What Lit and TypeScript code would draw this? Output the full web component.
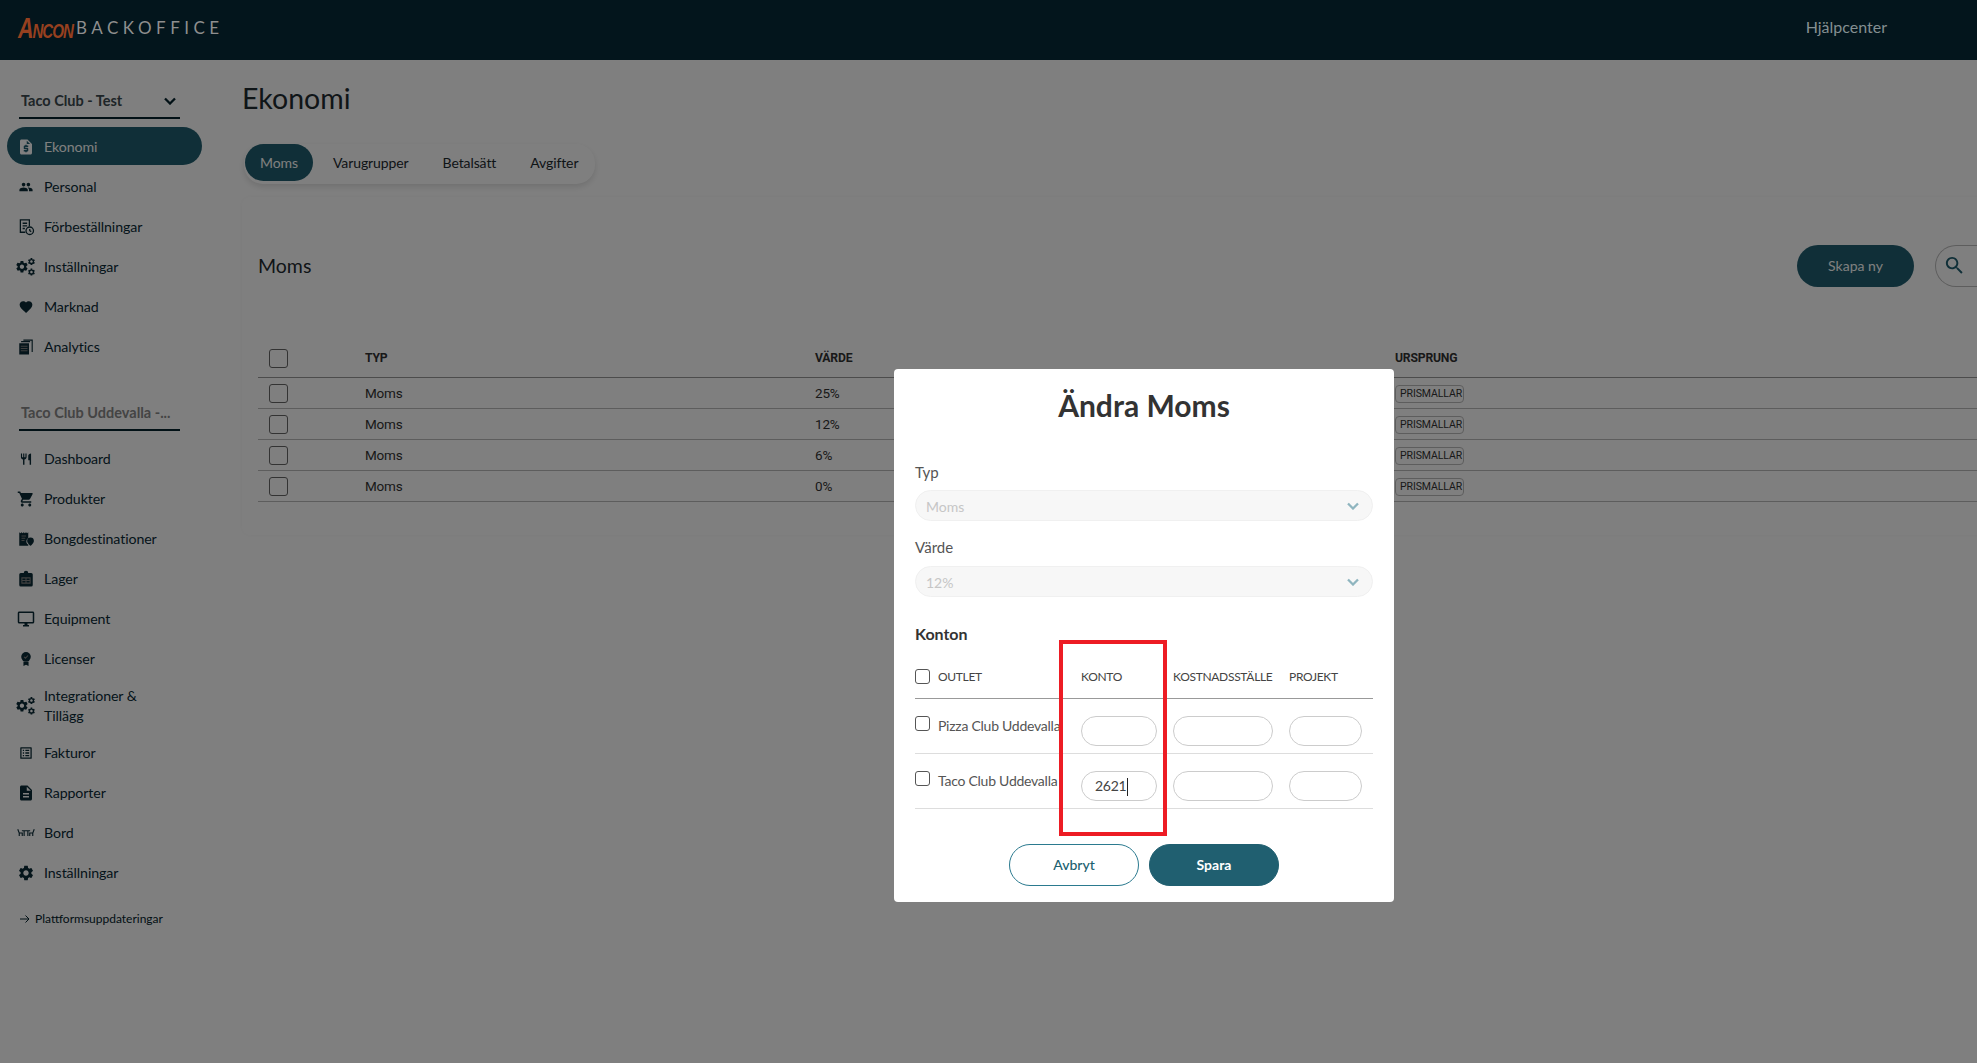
import { LitElement, html, css, svg } from 'lit';
import { customElement } from 'lit/decorators.js';

const p = (d: string) => svg`<path d=${d}></path>`;
// shrink a 24 unit glyph round the middle of its box
const small = (d: string, s: number) =>
  svg`<g transform="translate(${12 - 12 * s} ${12 - 12 * s}) scale(${s})"><path d=${d}></path></g>`;
const gearD = 'M19.14 12.94c.04-.3.06-.61.06-.94 0-.32-.02-.64-.07-.94l2.03-1.58c.18-.14.23-.41.12-.61l-1.92-3.32c-.12-.22-.37-.29-.59-.22l-2.39.96c-.5-.38-1.03-.7-1.62-.94l-.36-2.54c-.04-.24-.24-.41-.48-.41h-3.84c-.24 0-.43.17-.47.41l-.36 2.54c-.59.24-1.13.57-1.62.94l-2.39-.96c-.22-.08-.47 0-.59.22L2.74 8.87c-.12.21-.08.47.12.61l2.03 1.58c-.05.3-.09.63-.09.94s.02.64.07.94l-2.03 1.58c-.18.14-.23.41-.12.61l1.92 3.32c.12.22.37.29.59.22l2.39-.96c.5.38 1.03.7 1.62.94l.36 2.54c.05.24.24.41.48.41h3.84c.24 0 .44-.17.47-.41l.36-2.54c.59-.24 1.13-.56 1.62-.94l2.39.96c.22.08.47 0 .59-.22l1.92-3.32c.12-.22.07-.47-.12-.61l-2.01-1.58zM12 15.6c-1.98 0-3.6-1.62-3.6-3.6s1.62-3.6 3.6-3.6 3.6 1.62 3.6 3.6-1.62 3.6-3.6 3.6z';

const cogs = svg`
  <g transform="translate(-3 2) scale(.8)"><path d=${gearD}></path></g>
  <g transform="translate(13.5 -1) scale(.48)"><path d=${gearD}></path></g>
  <g transform="translate(13.5 13) scale(.48)"><path d=${gearD}></path></g>`;

const icons: Record<string, unknown> = {
  quote: p('M14 2H6c-1.1 0-1.99.9-1.99 2L4 20c0 1.1.89 2 1.99 2H18c1.1 0 2-.9 2-2V8l-6-6zm1 10h-4v1h3c.55 0 1 .45 1 1v3c0 .55-.45 1-1 1h-1v1h-2v-1H9v-2h4v-1h-3c-.55 0-1-.45-1-1v-3c0-.55.45-1 1-1h1V9h2v1h2v2zm-2-4V3.5L17.5 8H13z'),
  people: small('M16 11c1.66 0 2.99-1.34 2.99-3S17.66 5 16 5c-1.66 0-3 1.34-3 3s1.34 3 3 3zm-8 0c1.66 0 2.99-1.34 2.99-3S9.66 5 8 5C6.34 5 5 6.34 5 8s1.34 3 3 3zm0 2c-2.33 0-7 1.17-7 3.5V19h14v-2.5c0-2.33-4.67-3.5-7-3.5zm8 0c-.29 0-.62.02-.97.05 1.16.84 1.97 1.97 1.97 3.45V19h6v-2.5c0-2.33-4.67-3.5-7-3.5z', 0.8),
  preorder: svg`<g fill="none" stroke="currentColor" stroke-width="1.7">
    <path d="M11 19H4.500V2.500h12V11"></path><path d="M7.500 7h6M7.500 10.500h6M7.500 14h3"></path>
    <circle cx="17" cy="17" r="5"></circle><path d="M17 14.500V17l2 1.200"></path></g>`,
  cogs,
  heart: small('M12 21.35l-1.45-1.32C5.4 15.36 2 12.28 2 8.5 2 5.42 4.42 3 7.5 3c1.74 0 3.41.81 4.5 2.09C13.09 3.81 14.76 3 16.5 3 19.58 3 22 5.42 22 8.5c0 3.78-3.4 6.86-8.55 11.54L12 21.35z', 0.85),
  stack: svg`<path d="M3 7h13v15H3z"></path><path d="M18 5H6V3.500h12zM20 3H9V1.500h12.500V18H20z" transform="translate(-.5 .5)"></path>
    <path d="M5 11h9M5 14h9M5 17h9" stroke="#808080" stroke-width="1.300"></path>`,
  food: small('M11 9H9V2H7v7H5V2H3v7c0 2.12 1.66 3.84 3.75 3.97V22h2.5v-9.03C11.34 12.84 13 11.12 13 9V2h-2v7zm5-3v8h2.5v8H21V2c-2.76 0-5 2.24-5 4z', 0.75),
  cart: p('M7 18c-1.1 0-1.99.9-1.99 2S5.9 22 7 22s2-.9 2-2-.9-2-2-2zM1 2v2h2l3.6 7.59-1.35 2.45c-.16.28-.25.61-.25.96 0 1.1.9 2 2 2h12v-2H7.42c-.14 0-.25-.11-.25-.25l.03-.12.9-1.63h7.45c.75 0 1.41-.41 1.75-1.03l3.58-6.49c.08-.14.12-.31.12-.48 0-.55-.45-1-1-1H5.21l-.94-2H1zm16 16c-1.1 0-1.99.9-1.99 2s.89 2 1.99 2 2-.9 2-2-.9-2-2-2z'),
  bong: svg`<path d="M3 3l1.500 1.200L6 3l1.500 1.200L9 3l1.500 1.200L12 3l1.500 1.200L15 3v7.500a5.500 5.500 0 0 0-1 8.500H15v2H3z"></path>
    <path d="M6 8h6M6 11h5M6 14h4" stroke="#808080" stroke-width="1.300"></path>
    <path d="M18 10a4.500 4.500 0 0 1 4.500 4.500c0 3-4.500 6.500-4.500 6.500s-4.500-3.500-4.500-6.500A4.500 4.500 0 0 1 18 10z"></path>`,
  lager: svg`<path d="M5 4h4a3 3 0 0 1 6 0h4a2 2 0 0 1 2 2v14a2 2 0 0 1-2 2H5a2 2 0 0 1-2-2V6a2 2 0 0 1 2-2z"></path>
    <path d="M6.500 10.500h11v7h-11zM6.500 14h11M12 10.500v7" fill="none" stroke="#808080" stroke-width="1.400"></path>`,
  desktop: p('M21 2H3c-1.1 0-2 .9-2 2v12c0 1.1.9 2 2 2h7v2H8v2h8v-2h-2v-2h7c1.1 0 2-.9 2-2V4c0-1.100-.9-2-2-2zm0 14H3V4h18v12z'),
  license: svg`<g transform="translate(1.800 1.800) scale(.85)"><path d="M12 1a7.500 7.500 0 1 1 0 15 7.500 7.500 0 0 1 0-15z"></path><path d="M8 16h8v7l-4-2-4 2z"></path>
    <path d="M9 8.500l2.200 2.200L15.200 6.500" fill="none" stroke="#808080" stroke-width="1.600"></path></g>`,
  list: small('M19 5v14H5V5h14m1.100-2H3.900c-.5 0-.9.4-.9.9v16.200c0 .4.4.9.9.9h16.200c.4 0 .9-.5.9-.9V3.900c0-.5-.5-.9-.9-.9zM11 7h6v2h-6V7zm0 4h6v2h-6v-2zm0 4h6v2h-6v-2zM7 7h2v2H7V7zm0 4h2v2H7v-2zm0 4h2v2H7v-2z', 0.85),
  doc: p('M14 2H6c-1.100 0-1.990.9-1.990 2L4 20c0 1.100.89 2 1.990 2H18c1.100 0 2-.9 2-2V8l-6-6zm2 16H8v-2h8v2zm0-4H8v-2h8v2zm-3-5V3.500L18.500 9H13z'),
  table: svg`<g fill="none" stroke="currentColor" stroke-width="1.500">
    <path d="M6.500 9h11M9.500 9v7M14.500 9v7M1 7l2 5v4M3 12h4v4M23 7l-2 5v4M21 12h-4v4"></path></g>`,
  gear: p(gearD),
};

type NavItem = { icon: string; label: string; active?: boolean; wrap?: boolean };

const topNav: NavItem[] = [
  { icon: 'quote', label: 'Ekonomi', active: true },
  { icon: 'people', label: 'Personal' },
  { icon: 'preorder', label: 'Förbeställningar' },
  { icon: 'cogs', label: 'Inställningar' },
  { icon: 'heart', label: 'Marknad' },
  { icon: 'stack', label: 'Analytics' },
];

const bottomNav: NavItem[] = [
  { icon: 'food', label: 'Dashboard' },
  { icon: 'cart', label: 'Produkter' },
  { icon: 'bong', label: 'Bongdestinationer' },
  { icon: 'lager', label: 'Lager' },
  { icon: 'desktop', label: 'Equipment' },
  { icon: 'license', label: 'Licenser' },
  { icon: 'cogs', label: 'Integrationer & Tillägg', wrap: true },
  { icon: 'list', label: 'Fakturor' },
  { icon: 'doc', label: 'Rapporter' },
  { icon: 'table', label: 'Bord' },
  { icon: 'gear', label: 'Inställningar' },
];

const vatRows = ['25%', '12%', '6%', '0%'];
const outlets = [
  { name: 'Pizza Club Uddevalla', konto: '' },
  { name: 'Taco Club Uddevalla', konto: '2621' },
];

const chevron = svg`<svg class="chev" viewBox="0 0 12 8"><path d="M1 1.500l5 5 5-5" fill="none" stroke="currentColor" stroke-width="2.300"></path></svg>`;

@customElement('app-root')
export class AppRoot extends LitElement {
  static styles = css`
    :host {
      display: block;
      width: 1977px;
      height: 1063px;
      overflow: hidden;
      position: relative;
      background: #fff;
      font-family: Lato, 'Liberation Sans', sans-serif;
      color: #04222c;
    }
    * { box-sizing: border-box; }

    .topbar {
      position: relative;
      z-index: 1;
      height: 60px;
      background: #03151c;
      display: flex;
      align-items: center;
      padding: 0 0 5px 18px;
    }
    .ancon {
      color: #96401f;
      font: italic 700 30px 'Liberation Sans', sans-serif;
      letter-spacing: -1.500px;
      font-variant: small-caps;
      width: 58px;
      white-space: nowrap;
      transform: scaleX(.72);
      transform-origin: left center;
    }
    .backoffice {
      color: #8e8e8e;
      font-size: 17px;
      letter-spacing: 4.500px;
      font-weight: 400;
    }
    .help {
      margin: 0 90px 3px auto;
      color: #848f91;
      font-size: 16px;
    }

    .body { display: flex; height: 1003px; }
    .side { width: 242px; flex: none; }
    .select {
      margin: 24px 0 8px 19px;
      width: 161px;
      height: 35px;
      border-bottom: 2px solid #04222c;
      padding: 0 0 0 2px;
      display: flex;
      align-items: center;
      justify-content: space-between;
      font-size: 14.500px;
      font-weight: 700;
      color: #3d4a50;
    }
    .select .chev { width: 12px; height: 8px; margin-right: 4px; color: #04222c; }
    .select.second { margin-top: 30px; height: 36px; color: #888; }
    .nav-item {
      display: flex;
      align-items: center;
      gap: 6px;
      width: 195px;
      min-height: 38px;
      margin: 0 0 2px 7px;
      padding: 2px 16px 0 7px;
      border-radius: 19px;
      font-size: 14.200px;
      letter-spacing: -.1px;
      line-height: 20px;
      color: #0a2a36;
    }
    .nav-item.wrap { padding-top: 7px; padding-bottom: 5px; }
    .nav-item.wrap span { width: 120px; }
    .nav-item.active { background: #205f70; color: #fff; }
    .nav-item svg { width: 24px; height: 18px; flex: none; fill: currentColor; }
    .updates {
      display: flex;
      align-items: center;
      gap: 5px;
      margin: 20px 0 0 20px;
      font-size: 12px;
      color: #04222c;
    }
    .updates svg { width: 10px; height: 10px; }

    .main { flex: none; width: 1800px; }
    h1 {
      margin: 19px 0 0;
      font-size: 28.500px;
      line-height: 38px;
      font-weight: 400;
      color: #1f2b30;
    }
    .tabs {
      display: inline-flex;
      align-items: flex-start;
      gap: 34px;
      margin: 27px 0 0 2px;
      height: 40px;
      width: 351px;
      padding: 0 1px;
      background: #fff;
      border-radius: 19px;
      box-shadow: 0 3px 6px rgba(0, 0, 0, .12);
      font-size: 14px;
      letter-spacing: -.1px;
    }
    .tab { flex: none; height: 37px; line-height: 37px; color: #1d2a2f; }
    .tab.active {
      width: 68px;
      margin-right: -14px;
      text-align: center;
      background: #205f70;
      color: #fff;
      border-radius: 19px;
    }
    .card {
      margin-top: 13px;
      height: 338px;
      background: #fff;
      border-radius: 8px;
      box-shadow: 0 0 4px rgba(0, 0, 0, .04);
      padding: 48px 0 0 16px;
    }
    .card-head { display: flex; align-items: center; height: 42px; }
    .card-head h2 { margin: 0 0 2px; font-size: 19.500px; font-weight: 400; color: #1f2b30; }
    .create {
      margin-left: auto;
      flex: none;
      width: 117px;
      height: 42px;
      line-height: 42px;
      text-align: center;
      border-radius: 21px;
      background: #205f70;
      color: #fff;
      font-size: 14px;
    }
    .search {
      margin-left: 21px;
      flex: none;
      width: 107px;
      height: 42px;
      border: 1px solid #bbb;
      border-radius: 21px 0 0 21px;
      border-right: 0;
      padding: 8px 0 0 7px;
      color: #205f70;
    }
    .search svg { width: 23px; height: 23px; fill: currentColor; display: block; }
    .vat-row {
      display: grid;
      grid-template-columns: 107px 450px 580px 1fr;
      align-items: center;
      height: 31px;
      border-bottom: 1px solid #bbb;
      font: 13.500px Roboto, sans-serif;
      color: #333;
      letter-spacing: -.2px;
    }
    .vat-row.head {
      margin-top: 44px;
      height: 47px;
      padding-top: 7px;
      border-bottom-color: #999;
      font-size: 12.200px;
      font-weight: 700;
    }
    .box {
      width: 19px;
      height: 19px;
      margin-left: 11px;
      border: 1px solid #666;
      border-radius: 3px;
    }
    .head .box { margin-top: 2px; }
    .tag {
      width: 69px;
      height: 18px;
      margin-top: 1px;
      line-height: 16px;
      padding-left: 4px;
      border: 1px solid #bbb;
      border-radius: 4px;
      white-space: nowrap;
      font-size: 10.500px;
      letter-spacing: -.1px;
    }

    .overlay {
      position: absolute;
      inset: 0;
      background: rgba(0, 0, 0, .5);
      padding: 369px 0 0 894px;
    }
    .modal {
      position: relative;
      width: 500px;
      height: 533px;
      background: #fff;
      border-radius: 4px;
      padding: 16px 21px;
    }
    .modal h3 {
      margin: 0;
      height: 44px;
      line-height: 40px;
      text-align: center;
      font-size: 30px;
      font-weight: 700;
      color: #333;
    }
    .label { font-size: 15px; color: #555; height: 20px; line-height: 20px; }
    .label.typ { margin-top: 33px; margin-bottom: 8px; }
    .label.varde { margin-top: 16px; margin-bottom: 9px; }
    .dis {
      height: 31px;
      border: 1px solid #f0f0f0;
      border-radius: 16px;
      background: #f7f7f7;
      color: #c6c6c6;
      font-size: 14px;
      display: flex;
      align-items: center;
      justify-content: space-between;
      padding: 1px 13px 0 10px;
    }
    .dis .chev { width: 12px; height: 8px; color: #8fb5bf; }
    .konton {
      margin: 27px 0 0;
      height: 20px;
      line-height: 20px;
      font-size: 16px;
      font-weight: 700;
      color: #333;
    }
    .grid-row {
      display: grid;
      grid-template-columns: 166px 92px 116px 84px;
      border-bottom: 1px solid #ddd;
      height: 55px;
      font-size: 14px;
      letter-spacing: -.25px;
      color: #555;
    }
    .grid-row.head {
      height: 55px;
      margin-top: 0;
      align-items: center;
      font-size: 12px;
      letter-spacing: -.3px;
      color: #444;
      border-bottom-color: #999;
      padding-top: 10px;
    }
    .outlet {
      display: flex;
      gap: 8px;
      width: 148px;
      overflow: hidden;
      white-space: nowrap;
      padding-top: 17px;
    }
    .head .outlet { padding-top: 0; align-items: center; }
    .check {
      flex: none;
      width: 15px;
      height: 15px;
      border: 1px solid #555;
      border-radius: 3px;
    }
    .outlet-name { line-height: 20px; }
    .field {
      margin-top: 17px;
      height: 30px;
      border: 1px solid #ccc;
      border-radius: 15px;
      padding-left: 13px;
      line-height: 28px;
      font-size: 14px;
      color: #444;
    }
    .field .caret { display: inline-block; height: 18px; border-left: 1px solid #222; vertical-align: middle; margin-left: 1px; }
    .w76 { width: 76px; }
    .w100 { width: 100px; }
    .w73 { width: 73px; }
    .actions { display: flex; justify-content: center; gap: 10px; margin-top: 35px; }
    .btn {
      width: 130px;
      height: 42px;
      line-height: 40px;
      text-align: center;
      border-radius: 21px;
      border: 1px solid #2b7a8f;
      font-size: 14px;
      font-weight: 500;
      color: #205f70;
    }
    .btn.primary { background: #205f70; border-color: #205f70; color: #fff; font-weight: 700; }
    .mark {
      position: absolute;
      left: 165px;
      top: 271px;
      width: 108px;
      height: 196px;
      border: 4px solid #ed1c24;
    }
  `;

  private nav(items: NavItem[]) {
    return items.map(
      (i) => html`<div class="nav-item ${i.active ? 'active' : ''} ${i.wrap ? 'wrap' : ''}">
        <svg viewBox="0 0 24 24">${icons[i.icon]}</svg><span>${i.label}</span>
      </div>`
    );
  }

  render() {
    return html`
      <div class="topbar">
        <span class="ancon">Ancon</span>
        <span class="backoffice">BACKOFFICE</span>
        <span class="help">Hjälpcenter</span>
      </div>
      <div class="body">
        <aside class="side">
          <div class="select"><span>Taco Club - Test</span>${chevron}</div>
          ${this.nav(topNav)}
          <div class="select second"><span>Taco Club Uddevalla -...</span></div>
          ${this.nav(bottomNav)}
          <div class="updates">
            <svg viewBox="0 0 10 10"><path d="M0 5h9M5.500 1.500L9 5 5.500 8.500" fill="none" stroke="currentColor"></path></svg>
            <span>Plattformsuppdateringar</span>
          </div>
        </aside>
        <main class="main">
          <h1>Ekonomi</h1>
          <div class="tabs">
            <div class="tab active">Moms</div>
            <div class="tab">Varugrupper</div>
            <div class="tab">Betalsätt</div>
            <div class="tab">Avgifter</div>
          </div>
          <section class="card">
            <div class="card-head">
              <h2>Moms</h2>
              <div class="create">Skapa ny</div>
              <div class="search"><svg viewBox="0 0 24 24"><path d="M15.500 14h-.79l-.28-.27C15.410 12.590 16 11.110 16 9.500 16 5.910 13.090 3 9.500 3S3 5.910 3 9.500 5.910 16 9.500 16c1.610 0 3.090-.59 4.230-1.570l.27.28v.79l5 4.990L20.490 19l-4.990-5zm-6 0C7.010 14 5 11.990 5 9.500S7.010 5 9.500 5 14 7.010 14 9.500 11.990 14 9.500 14z"></path></svg></div>
            </div>
            <div class="vat-row head">
              <div class="box"></div><div>TYP</div><div>VÄRDE</div><div>URSPRUNG</div>
            </div>
            ${vatRows.map(
              (v) => html`<div class="vat-row">
                <div class="box"></div><div>Moms</div><div>${v}</div>
                <div><div class="tag">PRISMALLAR</div></div>
              </div>`
            )}
          </section>
        </main>
      </div>
      <div class="overlay">
        <div class="modal">
          <h3>Ändra Moms</h3>
          <div class="label typ">Typ</div>
          <div class="dis"><span>Moms</span>${chevron}</div>
          <div class="label varde">Värde</div>
          <div class="dis"><span>12%</span>${chevron}</div>
          <div class="konton">Konton</div>
          <div class="grid-row head">
            <div class="outlet"><span class="check"></span><span>OUTLET</span></div>
            <div>KONTO</div><div>KOSTNADSSTÄLLE</div><div>PROJEKT</div>
          </div>
          ${outlets.map(
            (o) => html`<div class="grid-row">
              <div class="outlet"><span class="check"></span><span class="outlet-name">${o.name}</span></div>
              <div class="field w76">${o.konto}${o.konto ? html`<span class="caret"></span>` : ''}</div>
              <div class="field w100"></div>
              <div class="field w73"></div>
            </div>`
          )}
          <div class="actions">
            <div class="btn">Avbryt</div>
            <div class="btn primary">Spara</div>
          </div>
          <div class="mark"></div>
        </div>
      </div>
    `;
  }
}
